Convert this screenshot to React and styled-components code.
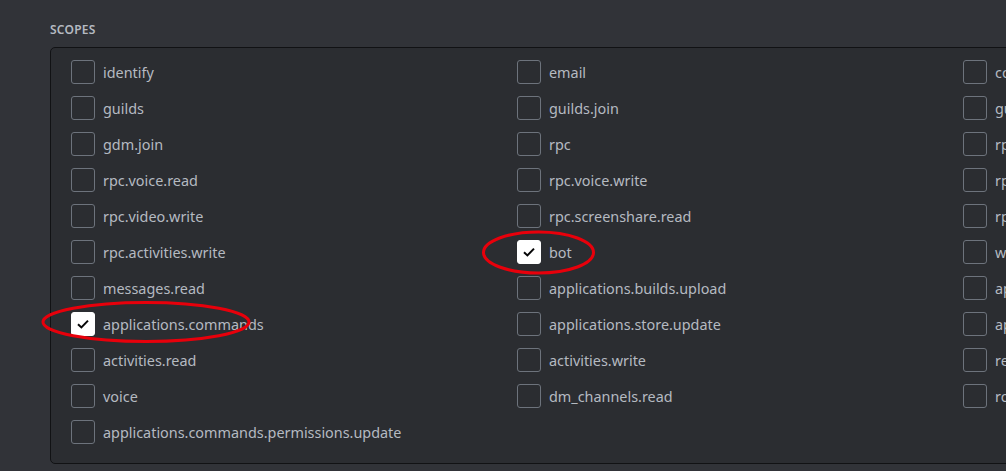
import styled, { createGlobalStyle } from "styled-components";

const scopes = [
  ["identify", "email", "connections"],
  ["guilds", "guilds.join", "guilds.members.read"],
  ["gdm.join", "rpc", "rpc.notifications.read"],
  ["rpc.voice.read", "rpc.voice.write", "rpc.video.read"],
  ["rpc.video.write", "rpc.screenshare.read", "rpc.screenshare.write"],
  ["rpc.activities.write", "bot", "webhook.incoming"],
  ["messages.read", "applications.builds.upload", "applications.builds.read"],
  ["applications.commands", "applications.store.update", "applications.entitlements"],
  ["activities.read", "activities.write", "relationships.read"],
  ["voice", "dm_channels.read", "role_connections.write"],
  ["applications.commands.permissions.update"],
];

const checked = ["bot", "applications.commands"];

const Global = createGlobalStyle`
  html, body {
    margin: 0;
    background: #313338;
    overflow: hidden;
  }
`;

const App = () => {
  return (
    <Page>
      <Global />
      <Title>Scopes</Title>
      <Box>
        {scopes.flat().map((name) => {
          const on = checked.includes(name);
          return (
            <Item key={name}>
              <Check $on={on}>
                {on && (
                  <svg width="14" height="14" viewBox="0 0 14 14">
                    <path
                      d="M2 7.2 L5.4 10.4 L12 3.6"
                      fill="none"
                      stroke="#060607"
                      strokeWidth="2"
                    />
                  </svg>
                )}
              </Check>
              <Label>{name}</Label>
            </Item>
          );
        })}
      </Box>
      <Marks width="1006" height="471" viewBox="0 0 1006 471">
        <ellipse cx="146" cy="322" rx="103" ry="19.5" fill="none" stroke="#e8000b" strokeWidth="3" />
        <ellipse cx="538.5" cy="252.5" rx="55" ry="20.5" fill="none" stroke="#e8000b" strokeWidth="3" />
      </Marks>
    </Page>
  );
};

const Page = styled.div`
  position: relative;
  width: 1006px;
  height: 471px;
  padding: 24px 0 0 50px;
  box-sizing: border-box;
  font-family: "Noto Sans", "Open Sans", sans-serif;
`;

const Title = styled.h2`
  margin: 0 0 11px;
  font-size: 12px;
  line-height: 12px;
  font-weight: 600;
  letter-spacing: 0.02em;
  text-transform: uppercase;
  color: #b5bac1;
`;

const Box = styled.div`
  width: 1400px;
  box-sizing: border-box;
  display: grid;
  grid-template-columns: repeat(3, 446px);
  row-gap: 12px;
  padding: 12px 20px 19px;
  background: #2b2d31;
  border: 1px solid #111214;
  border-radius: 5px;
`;

const Item = styled.div`
  display: flex;
  align-items: center;
  height: 24px;
  gap: 8px;
`;

const Check = styled.div`
  width: 24px;
  height: 24px;
  box-sizing: border-box;
  flex-shrink: 0;
  display: flex;
  align-items: center;
  justify-content: center;
  border-radius: 3px;
  border: 1px solid ${(p) => (p.$on ? "#ffffff" : "#6d737c")};
  background: ${(p) => (p.$on ? "#ffffff" : "transparent")};
`;

const Label = styled.span`
  font-size: 14.4px;
  color: #b5bac1;
  white-space: nowrap;
`;

const Marks = styled.svg`
  position: absolute;
  top: 0;
  left: 0;
  pointer-events: none;
`;

export default App;
